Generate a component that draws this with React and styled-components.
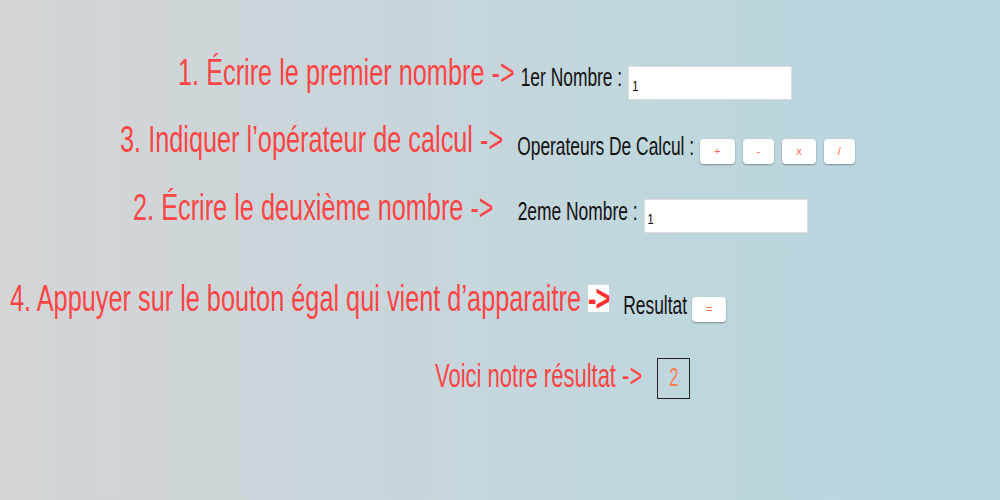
import React from 'react';
import styled, { createGlobalStyle } from 'styled-components';

const GlobalStyle = createGlobalStyle`
  html, body {
    margin: 0;
    padding: 0;
  }
  body {
    width: 1000px;
    height: 500px;
    overflow: hidden;
    background: linear-gradient(90deg, #d4d5d6 0%, #c6d6dc 45%, #b6d7e0 100%);
    font-family: "Liberation Sans", Arial, sans-serif;
  }
`;

const Page = styled.main`
  display: flex;
  flex-direction: column;
  padding-top: 63px;
`;

// one instruction line, placed by its left edge and the space above it
const Row = styled.section`
  display: flex;
  align-items: center;
  height: 40px;
  margin-top: ${({ $gap }) => $gap || 0}px;
  margin-left: ${({ $left }) => $left}px;
  gap: ${({ $spacing }) => $spacing || 6}px;
`;

// the screenshot is stretched vertically, so text gets a scaleY
const Instruction = styled.span`
  display: inline-block;
  font-size: ${({ $size }) => $size || 25.3}px;
  line-height: 1;
  color: #ff4545;
  white-space: pre;
  margin-right: ${({ $after }) => $after || 0}px;
  transform: translateY(${({ $dy }) => $dy || 0}px) scaleY(${({ $scale }) => $scale || 1.43});
`;

const Arrow = styled.span`
  display: inline-block;
  line-height: 0.72;
  padding-bottom: 1px;
  background: #ffffff;
  color: #ff3030;
  font-weight: bold;
  letter-spacing: -1px;
`;

const Label = styled.span`
  display: inline-block;
  font-size: 17.4px;
  line-height: 1;
  color: #111;
  white-space: pre;
  margin-right: ${({ $after }) => $after || 0}px;
  transform: translateY(${({ $dy }) => $dy || 0}px) scaleY(1.45);
`;

const NumberInput = styled.div`
  box-sizing: border-box;
  width: 164px;
  height: 34px;
  background: #fff;
  border: 1px solid #dcdcdc;
  display: flex;
  align-items: center;
  padding-left: 3px;
  font-size: 11px;
  color: #000;

  span {
    display: inline-block;
    transform: translateY(2px) scaleY(1.4);
  }
`;

const Operators = styled.div`
  display: flex;
  gap: 8px;
`;

const OpButton = styled.button`
  height: 25px;
  padding: 0 14px;
  border: none;
  border-radius: 4px;
  background: #fff;
  box-shadow: 0 1px 2px rgba(0, 0, 0, 0.35);
  color: #ff6a55;
  font-family: "Liberation Sans", Arial, sans-serif;
  font-size: 11px;
  cursor: pointer;
  transform: translateY(${({ $dy }) => $dy || 0}px);
`;

const ResultBox = styled.div`
  box-sizing: border-box;
  width: 33px;
  height: 41px;
  border: 1px solid #222;
  display: flex;
  align-items: center;
  justify-content: center;
  color: #ff7f4f;
  font-size: 17px;

  span {
    display: inline-block;
    transform: scaleY(1.55);
  }
`;

export default function App() {
  return (
    <>
      <GlobalStyle />
      <Page>
        <Row $left={178}>
          <Instruction $dy={-10}>1. Écrire le premier nombre -&gt;</Instruction>
          <Label $dy={-4}>1er Nombre :</Label>
          <NumberInput><span>1</span></NumberInput>
        </Row>

        <Row $left={120} $gap={28}>
          <Instruction $dy={-11} $after={8}>3. Indiquer l’opérateur de calcul -&gt;</Instruction>
          <Label $dy={-3}>Operateurs De Calcul :</Label>
          <Operators>
            <OpButton>+</OpButton>
            <OpButton>-</OpButton>
            <OpButton>x</OpButton>
            <OpButton>/</OpButton>
          </Operators>
        </Row>

        <Row $left={133} $gap={25}>
          <Instruction $dy={-8} $after={18}>2. Écrire le deuxième nombre -&gt;</Instruction>
          <Label $dy={-3}>2eme Nombre :</Label>
          <NumberInput><span>1</span></NumberInput>
        </Row>

        <Row $left={10} $gap={52} $spacing={5}>
          <Instruction $dy={-9} $after={9}>
            4. Appuyer sur le bouton égal qui vient d’apparaitre <Arrow>-&gt;</Arrow>
          </Instruction>
          <Label $dy={-1}>Resultat</Label>
          <OpButton $dy={1}>=</OpButton>
        </Row>

        <Row $left={435} $gap={30} $spacing={15}>
          <Instruction $dy={-2} $size={22} $scale={1.55}>Voici notre résultat -&gt;</Instruction>
          <ResultBox><span>2</span></ResultBox>
        </Row>
      </Page>
    </>
  );
}
